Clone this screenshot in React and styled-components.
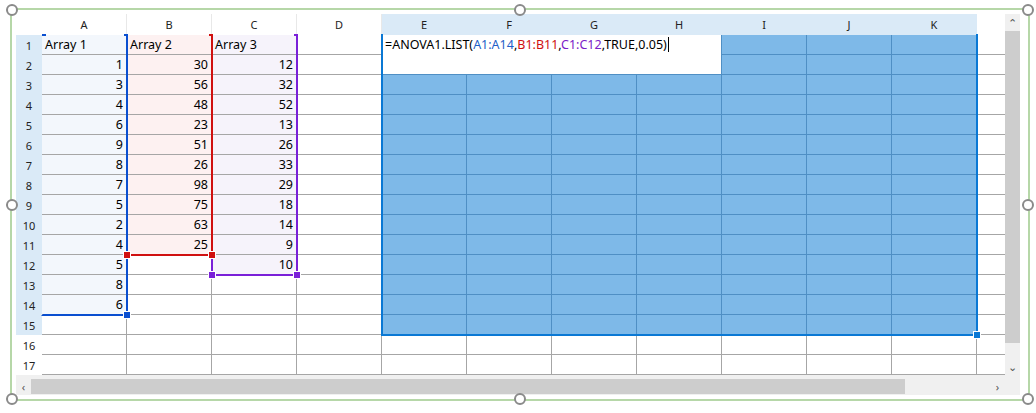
import React from "react";
import styled, { createGlobalStyle } from "styled-components";

const Global = createGlobalStyle`
  body { margin: 0; background: #fff; font-family: "Noto Sans", "Liberation Sans", sans-serif; }
`;

const COLS = ["A","B","C","D","E","F","G","H","I","J","K"];
const CW = 85, RH = 20, HH = 21, RW = 26;
const data = {
  A: ["Array 1",1,3,4,6,9,8,7,5,2,4,5,8,6],
  B: ["Array 2",30,56,48,23,51,26,98,75,63,25],
  C: ["Array 3",12,32,52,13,26,33,29,18,14,9,10],
};
const tint = { A: "#f3f7fc", B: "#fdf1f1", C: "#f6f3fb" };

const Frame = styled.div`
  position: absolute; left: 10px; top: 8px;
  width: 1004px; height: 381px;
  border: 2px solid #b6d7a8;
  padding: 4px 8px 4px 4px;
`;
const Handle = styled.div`
  position: absolute; width: 8px; height: 8px; border-radius: 50%;
  border: 2px solid #8a8a8a; background: #fff;
  left: ${p => p.x}; top: ${p => p.y}; transform: translate(-50%, -50%);
`;
const Body = styled.div`display: grid; grid-template-columns: 989px 15px; grid-template-rows: 361px 20px; background:#f0f0f0;`;
const Sheet = styled.div`
  position: relative; background: #fff; overflow: hidden;
  display: grid; grid-template-columns: ${RW}px repeat(11, ${CW}px) 1fr;
  grid-template-rows: ${HH}px repeat(17, ${RH}px);
  font-size: 12.5px; color: #000;
`;
const ColHead = styled.div`
  background: ${p => p.sel ? "#daeaf7" : "#fff"};
  border-right: 1px solid ${p => p.sel ? "#daeaf7" : "#e8e8e8"};
  font-size: 11px; display: flex; align-items: center; justify-content: center; color:#222;
`;
const RowHead = styled.div`
  background: ${p => p.sel ? "#daeaf7" : "#fff"};
  font-size: 11px; display: flex; align-items: center; justify-content: center; color:#222;
`;
const Cell = styled.div`
  background: ${p => p.bg || "#fff"};
  border-right: 1px solid ${p => p.sel ? "#4f8fc4" : "#a6a6a6"};
  border-bottom: 1px solid ${p => p.sel ? "#4f8fc4" : "#a6a6a6"};
  display: flex; align-items: center; justify-content: ${p => p.left ? "flex-start" : "flex-end"};
  padding: 0 3px; white-space: nowrap; overflow: hidden;
`;
const Formula = styled.div`
  grid-column: 6 / span 4; grid-row: 2 / span 2;
  background: #fff; border-right: 1px solid #4f8fc4; border-bottom: 1px solid #4f8fc4;
  padding: 1px 3px; white-space: nowrap; font-size: 12.5px;
`;
const Caret = styled.span`display:inline-block; width:1px; height:15px; background:#000; vertical-align:-3px; margin-left:1px;`;
const Ref = styled.span`color: ${p => p.c};`;
const Range = styled.div`
  position: absolute; pointer-events: none;
  left: ${p => p.x}px; top: ${p => p.y}px; width: ${p => p.w}px; height: ${p => p.h}px;
  border: 2px solid ${p => p.c}; border-top-color: transparent;
  border-left-color: ${p => p.noLeft ? "transparent" : p.c};
  box-sizing: border-box;
`;
const Sq = styled.div`
  position: absolute; width: 6px; height: 6px; background: ${p => p.c};
  border: 1px solid #fff; left: ${p => p.x}px; top: ${p => p.y}px;
`;
const Tick = styled.div`position:absolute; width:4px; height:2px; background:${p=>p.c}; left:${p=>p.x}px; top:${p=>p.y}px;`;
const VScroll = styled.div`display:flex; flex-direction:column; align-items:center; background:#f0f0f0;`;
const Thumb = styled.div`background:#cdcdcd; ${p => p.v ? "width:15px; height:312px;" : "height:15px; width:874px;"}`;
const Arrow = styled.div`font-size:11px; color:#555; height:17px; display:flex; align-items:center; justify-content:center; width:15px;`;
const HScroll = styled.div`display:flex; align-items:center; background:#f0f0f0; height:15px; margin-top:4px;`;

export default function App() {
  const cells = [];
  COLS.forEach((c, i) => cells.push(<ColHead key={"h"+c} sel={i >= 4} style={{gridColumn: i+2, gridRow: 1}}>{c}</ColHead>));
  for (let r = 1; r <= 17; r++) {
    cells.push(<RowHead key={"r"+r} sel={r <= 15} style={{gridColumn:1, gridRow:r+1}}>{r}</RowHead>);
    COLS.forEach((c, i) => {
      const inSel = i >= 4 && r <= 15;
      if (inSel && i <= 7 && r <= 2) return;
      let bg, val;
      const arr = data[c];
      if (arr && r <= arr.length) { bg = tint[c]; val = arr[r-1]; }
      if (inSel) bg = "#7eb9e8";
      cells.push(<Cell key={c+r} sel={inSel} bg={bg} left={r===1} style={{gridColumn:i+2, gridRow:r+1}}>{val}</Cell>);
    });
    cells.push(<Cell key={"x"+r} style={{gridColumn:13, gridRow:r+1, borderRight:"none"}} />);
  }
  const X = i => RW + i*CW, Y = r => HH + (r-1)*RH;
  return (
    <>
      <Global />
      <Frame>
        <Body>
          <Sheet>
            {cells}
            <Formula>=ANOVA1.LIST(<Ref c="#1f5fc8">A1:A14</Ref>,<Ref c="#d01010">B1:B11</Ref>,<Ref c="#7a20c8">C1:C12</Ref>,TRUE,0.05)<Caret /></Formula>
            <Range c="#7a20d8" x={X(2)-1} y={Y(1)-1} w={CW+2} h={12*RH+2} />
            <Range c="#d01010" noLeft x={X(1)-1} y={Y(1)-1} w={CW+2} h={11*RH+2} />
            <Range c="#0a4fd0" noLeft x={X(0)-1} y={Y(1)-1} w={CW+2} h={14*RH+2} />
            <Range c="#0a78d4" x={X(4)-1} y={Y(1)-1} w={7*CW+2} h={15*RH+2} style={{borderTopColor:"#0a78d4", borderTop:"none"}} />
            <Tick c="#0a4fd0" x={X(0)} y={Y(1)-1} /><Tick c="#0a4fd0" x={X(1)-3} y={Y(1)-1} />
            <Tick c="#d01010" x={X(2)-3} y={Y(1)-1} /><Tick c="#7a20d8" x={X(3)-3} y={Y(1)-1} />
            <Sq c="#0a4fd0" x={X(1)-4} y={Y(15)-4} />
            <Sq c="#d01010" x={X(1)-4} y={Y(12)-4} /><Sq c="#d01010" x={X(2)-4} y={Y(12)-4} />
            <Sq c="#7a20d8" x={X(2)-4} y={Y(13)-4} /><Sq c="#7a20d8" x={X(3)-4} y={Y(13)-4} />
            <Sq c="#0a78d4" x={X(11)-4} y={Y(16)-4} />
          </Sheet>
          <VScroll>
            <Arrow>⌃</Arrow>
            <Thumb v />
            <div style={{flex:1}} />
            <Arrow>⌄</Arrow>
          </VScroll>
          <HScroll>
            <Arrow>‹</Arrow>
            <Thumb />
            <div style={{flex:1}} />
            <Arrow>›</Arrow>
          </HScroll>
          <div />
        </Body>
        <Handle x="0" y="0" /><Handle x="50%" y="0" /><Handle x="100%" y="0" />
        <Handle x="0" y="50%" /><Handle x="100%" y="50%" />
        <Handle x="0" y="100%" /><Handle x="50%" y="100%" /><Handle x="100%" y="100%" />
      </Frame>
    </>
  );
}
